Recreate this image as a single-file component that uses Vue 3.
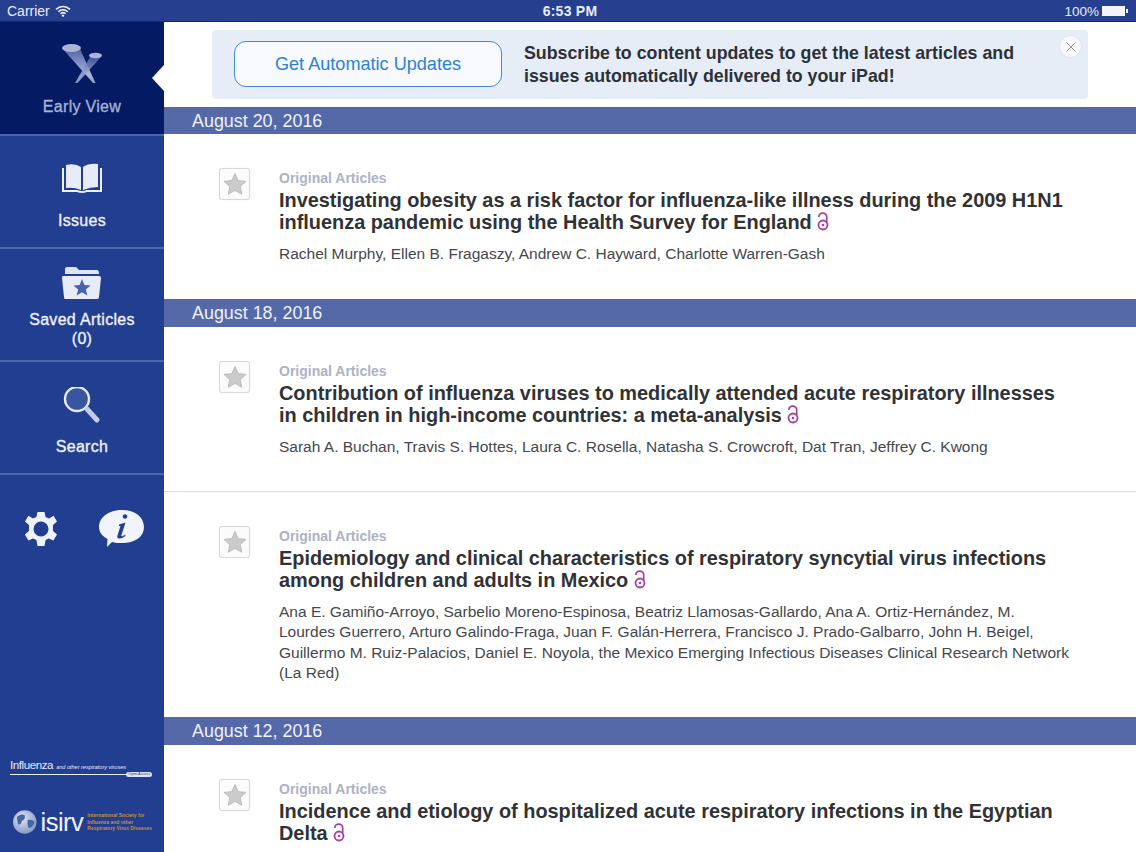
<script setup>
const sections = [
  { date: 'August 20, 2016', articles: [
    { h: 165, title: 'Investigating obesity as a risk factor for influenza-like illness during the 2009 H1N1 influenza pandemic using the Health Survey for England', authors: 'Rachel Murphy, Ellen B. Fragaszy, Andrew C. Hayward, Charlotte Warren-Gash' } ] },
  { date: 'August 18, 2016', articles: [
    { h: 165, title: 'Contribution of influenza viruses to medically attended acute respiratory illnesses in children in high-income countries: a meta-analysis', authors: 'Sarah A. Buchan, Travis S. Hottes, Laura C. Rosella, Natasha S. Crowcroft, Dat Tran, Jeffrey C. Kwong' },
    { h: 225, title: 'Epidemiology and clinical characteristics of respiratory syncytial virus infections among children and adults in Mexico', authors: 'Ana E. Gamiño-Arroyo, Sarbelio Moreno-Espinosa, Beatriz Llamosas-Gallardo, Ana A. Ortiz-Hernández, M. Lourdes Guerrero, Arturo Galindo-Fraga, Juan F. Galán-Herrera, Francisco J. Prado-Galbarro, John H. Beigel, Guillermo M. Ruiz-Palacios, Daniel E. Noyola, the Mexico Emerging Infectious Diseases Clinical Research Network (La Red)' } ] },
  { date: 'August 12, 2016', articles: [
    { h: 165, title: 'Incidence and etiology of hospitalized acute respiratory infections in the Egyptian Delta', authors: '' } ] },
]
</script>

<template>
  <div class="page">
    <header class="status">
      <div class="st-left">
        <span class="carrier">Carrier</span>
        <svg width="16" height="12" viewBox="0 0 16 12"><path d="M1 4.4a10 10 0 0 1 14 0M3.3 6.7a6.8 6.8 0 0 1 9.4 0M5.5 8.8a3.6 3.6 0 0 1 5 0" fill="none" stroke="#eef1fa" stroke-width="1.5"/><circle cx="8" cy="10.6" r="1.2" fill="#eef1fa"/></svg>
      </div>
      <div class="st-time">6:53 PM</div>
      <div class="st-right">
        <span>100%</span>
        <span class="battery"></span>
      </div>
    </header>

    <div class="body">
      <nav class="side">
        <div class="nav-item active">
          <svg class="ic" width="50" height="42" viewBox="0 0 50 42">
            <defs>
              <linearGradient id="beam" x1="0" y1="0" x2="0" y2="1">
                <stop offset="0" stop-color="#4f62a3"/>
                <stop offset="0.75" stop-color="#a8b5da"/>
                <stop offset="1" stop-color="#8e9dcb"/>
              </linearGradient>
            </defs>
            <path d="M5 5 L23 6 L38.5 40 L36 40Z" fill="url(#beam)"/>
            <path d="M33 14 L44 14 L20.5 40 L18 40Z" fill="url(#beam)" opacity=".85"/>
            <ellipse cx="14.5" cy="5" rx="9.5" ry="4" fill="#aab6d9"/>
            <ellipse cx="38.5" cy="12.5" rx="6.5" ry="2.8" fill="#aab6d9"/>
          </svg>
          <span class="lbl">Early View</span>
          <span class="caret"></span>
        </div>
        <div class="nav-item issues">
          <svg class="ic" width="42" height="34" viewBox="0 0 42 34">
            <path d="M1 5 V29 H16 Q21 31 26 29 H41 V5 H39 V27 H26 Q21 29 16 27 H3 V5Z" fill="#eef1fb"/>
            <path d="M5 2 Q14 0 20 4 V27 Q13 24 5 25Z" fill="#e8ecf8"/>
            <path d="M37 1 Q28 0 22 4 V27 Q29 24 37 24Z" fill="#e8ecf8"/>
          </svg>
          <span class="lbl">Issues</span>
        </div>
        <div class="nav-item saved">
          <svg class="ic" width="42" height="34" viewBox="0 0 42 34">
            <path d="M4 8 V3 Q4 1 6 1 H14 Q16 1 17 3 L18 4 H36 Q38 4 38 8Z" fill="#dfe5f5"/>
            <path d="M2 10 H38 Q40 10 40 12 L38 31 Q38 33 36 33 H4 Q3 33 3 31 L1 12 Q1 10 2 10Z" fill="#e8ecf9"/>
            <path d="M21 13 L23.4 19 L29.6 19.4 L24.8 23.4 L26.4 29.5 L21 26.2 L15.6 29.5 L17.2 23.4 L12.4 19.4 L18.6 19Z" fill="#4462ae"/>
          </svg>
          <span class="lbl">Saved Articles<br />(0)</span>
        </div>
        <div class="nav-item search">
          <svg class="ic" width="42" height="42" viewBox="0 0 42 42">
            <circle cx="16" cy="12" r="12" fill="#3a559f" stroke="#e8ecf9" stroke-width="2.4"/>
            <path d="M26 22 L36 33" stroke="#c3cdea" stroke-width="5" stroke-linecap="round"/>
          </svg>
          <span class="lbl">Search</span>
        </div>
        <div class="tools">
          <svg width="38" height="38" viewBox="0 0 38 38">
            <path fill="#eef2fb" fill-rule="evenodd" d="M15.5 2 H22.5 L23.6 7 L27 8.4 L31.6 5.8 L35 11.6 L31 15 V21 L35 24.6 L31.4 30.6 L26.8 28.4 L23.6 30 L22.5 36 H15.5 L14.4 30 L11 28.4 L6.4 30.6 L2.8 24.6 L7 21 V15 L3 11.6 L6.4 5.8 L11 8.4 L14.4 7Z M19 11.5 A7.5 7.5 0 1 0 19 26.5 A7.5 7.5 0 1 0 19 11.5Z"/>
          </svg>
          <svg width="48" height="40" viewBox="0 0 48 40">
            <path d="M24 1 C37 1 46 8 46 18 C46 28 37 34 24 34 C20 34 17 34 14 33 L9 38 L9.5 30 C4 27 1 23 1 18 C1 8 11 1 24 1Z" fill="#f1f4fb"/>
            <circle cx="27" cy="7.5" r="2.3" fill="#233f91"/>
            <path d="M21 15.5 L27.5 13.5 L23.5 26 C23 28 25 27.5 27 25.5 L27.6 26.3 C25 30 18.5 31 19.3 27 L22.5 17 L21 17Z" fill="#233f91"/>
          </svg>
        </div>
        <div class="logos">
          <div class="flu">
            <div class="flu-text"><span class="flu-big">Influenza</span> <i>and other respiratory viruses</i></div>
            <div class="flu-line"><span class="rule"></span><span class="oa">Open Access</span></div>
          </div>
          <div class="isirv">
            <svg width="26" height="26" viewBox="0 0 26 26">
              <defs>
                <radialGradient id="globe" cx="0.4" cy="0.35" r="0.7">
                  <stop offset="0" stop-color="#dfe6f2"/>
                  <stop offset="1" stop-color="#7f95c2"/>
                </radialGradient>
              </defs>
              <circle cx="13" cy="13" r="12" fill="url(#globe)"/>
              <path d="M5 8 Q9 4 13 6 Q14 10 10 12 Q9 17 6 15Z M16 11 Q21 10 23 13 Q21 19 17 19 Q15 15 16 11Z" fill="#47659f"/>
            </svg>
            <span class="isirv-name">isirv</span>
            <span class="isirv-sub">International Society for<br />Influenza and other<br />Respiratory Virus Diseases</span>
          </div>
        </div>
      </nav>

      <main class="main">
        <div class="banner-wrap">
          <div class="banner">
            <button class="get">Get Automatic Updates</button>
            <p class="sub">Subscribe to content updates to get the latest articles and issues automatically delivered to your iPad!</p>
            <span class="close">
              <svg width="10" height="10" viewBox="0 0 10 10"><path d="M0.5 0.5 L9.5 9.5 M9.5 0.5 L0.5 9.5" stroke="#939393" stroke-width="1"/></svg>
            </span>
          </div>
        </div>
        <section v-for="s in sections" :key="s.date">
          <div class="date">{{ s.date }}</div>
          <article v-for="a in s.articles" :key="a.title" class="art" :style="{ height: a.h + 'px' }">
            <span class="fav">
              <svg width="24" height="24" viewBox="0 0 24 24">
                <path d="M12 1.5 L15.2 8.6 L23 9.4 L17.2 14.6 L18.8 22.3 L12 18.4 L5.2 22.3 L6.8 14.6 L1 9.4 L8.8 8.6Z" fill="#cbcbcb" stroke="#b4b4b4" stroke-width=".8"/>
              </svg>
            </span>
            <div class="txt">
              <div class="cat">Original Articles</div>
              <h2 class="ttl">{{ a.title }} <svg class="oa-ic" width="12" height="19" viewBox="0 0 12 19"><path d="M1.8 5 A3.9 3.9 0 0 1 9.7 5 V10" fill="none" stroke="#a2419f" stroke-width="1.7"/><circle cx="6" cy="13" r="4.5" fill="none" stroke="#a2419f" stroke-width="1.8"/><circle cx="6" cy="13" r="1.3" fill="#a2419f"/></svg></h2>
              <p v-if="a.authors" class="auth">{{ a.authors }}</p>
            </div>
          </article>
        </section>
      </main>
    </div>
  </div>
</template>

<style>
html, body { margin: 0; background: #fff; }
</style>

<style scoped>
.page { width: 1136px; height: 852px; overflow: hidden; display: flex; flex-direction: column; font-family: "Liberation Sans", Arial, sans-serif; background: #fff; }
.status { flex: none; background: #26408f; color: #e9edf8; font-size: 13.5px; display: flex; align-items: center; justify-content: space-between; padding: 1px 7px 0; position: relative; border-bottom: 1px solid #0f2a78; box-sizing: content-box; height: 20px; }
.st-left, .st-right { display: flex; align-items: center; gap: 5px; }
.carrier { font-size: 14px; }
.st-time { position: absolute; left: 4px; right: 0; text-align: center; font-weight: 700; font-size: 14px; letter-spacing: .25px; }
.st-right { gap: 3px; padding-right: 2px; }
.battery { width: 23px; height: 10px; background: #f3f5fb; position: relative; margin-right: 2px; }
.battery::after { content: ""; position: absolute; left: 24px; top: 3px; width: 1.5px; height: 4px; background: #f3f5fb; }
.body { flex: 1; display: flex; min-height: 0; }
.side { width: 164px; flex: none; background: #223e90; display: flex; flex-direction: column; color: #eef1fa; }
.nav-item { flex: none; border-bottom: 2px solid #4d66ab; display: flex; flex-direction: column; align-items: center; position: relative; }
.nav-item .ic { height: 42px; flex: none; }
.nav-item.active { background: #041a63; padding-top: 21px; height: 91px; color: #a5b0d2; }
.nav-item.issues { padding-top: 23px; height: 88px; }
.nav-item.saved { padding-top: 13px; height: 98px; }
.nav-item.search { padding-top: 25px; height: 86px; }
.lbl { font-size: 16px; font-weight: 400; line-height: 18px; text-align: center; margin-top: 9px; letter-spacing: .3px; -webkit-text-stroke: .35px currentColor; }
.active .lbl { margin-top: 13px; }
.issues .lbl { margin-top: 11px; }
.saved .lbl { margin-top: 6px; line-height: 19px; }
.caret { position: absolute; right: 0; top: 43px; width: 0; height: 0; border-style: solid; border-width: 13.5px 12px 13.5px 0; border-color: transparent #fff transparent transparent; }
.tools { display: flex; justify-content: space-between; align-items: center; padding: 34px 18px 0 22px; }
.logos { margin-top: auto; padding: 0 12px 17px 10px; }
.flu-text { white-space: nowrap; font-size: 11.6px; color: #e6eaf6; line-height: 14px; margin-bottom: -2px; }
.flu-big { letter-spacing: -.45px; }
.flu-text i { font-size: 5.5px; }
.flu-line { display: flex; align-items: center; }
.rule { flex: 1; height: 1.5px; background: #eef1fa; }
.oa { font-size: 3.7px; line-height: 5px; background: #dde3f2; color: #223e90; border-radius: 3px; padding: 0 2px; white-space: nowrap; }
.isirv { display: flex; align-items: center; margin-top: 32px; margin-left: 2px; }
.isirv-name { font-size: 25.5px; line-height: 26px; color: #f0f3fb; margin-left: 3px; letter-spacing: -.5px; }
.isirv-sub { font-size: 5px; line-height: 6.5px; font-weight: 700; color: #c98a3c; margin-left: 4px; white-space: nowrap; }
.main { flex: 1; min-width: 0; }
.banner-wrap { height: 85px; padding: 8px 48px 0; box-sizing: border-box; }
.banner { height: 69px; background: #e7edf6; border-radius: 4px; display: flex; align-items: center; padding-left: 22px; position: relative; }
.get { width: 268px; height: 46px; flex: none; margin-bottom: 2px; box-sizing: border-box; background: #f7f9fc; border: 1.5px solid #3d8ad4; border-radius: 12px; color: #2a82d6; font: 18.1px "Liberation Sans", Arial, sans-serif; padding: 2px 0 0; }
.sub { margin: 0 0 0 22px; width: 520px; font-size: 17.8px; font-weight: 700; line-height: 23px; color: #2c3038; }
.close { position: absolute; right: 6px; top: 5px; width: 23px; height: 23px; border-radius: 50%; background: #f7f8fb; border: 1px solid #dfe3ea; box-sizing: border-box; display: flex; align-items: center; justify-content: center; }
.date { height: 28px; background: #5569a9; color: #f0f2f9; font-size: 17.9px; line-height: 28px; padding-left: 28px; }
section:first-of-type .date { height: 27px; }
.art { display: flex; box-sizing: border-box; padding: 34px 62px 0 55px; border-bottom: 1px solid #dcdcdc; }
section .art:last-child { border-bottom: 0; }
.fav { width: 31px; height: 32px; flex: none; box-sizing: border-box; border: 1px solid #d9d9d9; border-radius: 3px; background: #fbfbfb; display: flex; align-items: center; justify-content: center; box-shadow: 0 0 1px #ddd; }
.fav svg { width: 24px; height: 24px; }
.txt { margin-left: 29px; flex: 1; min-width: 0; }
.cat { font-size: 14px; font-weight: 700; color: #adb2c4; line-height: 17px; margin-top: 2px; }
.ttl { margin: 3px 10px 0 0; font-size: 19.9px; font-weight: 700; line-height: 21.5px; color: #303236; }
.oa-ic { vertical-align: -2px; }
.auth { margin: 11px 0 0; font-size: 15.5px; line-height: 20.4px; color: #45474d; }
</style>
